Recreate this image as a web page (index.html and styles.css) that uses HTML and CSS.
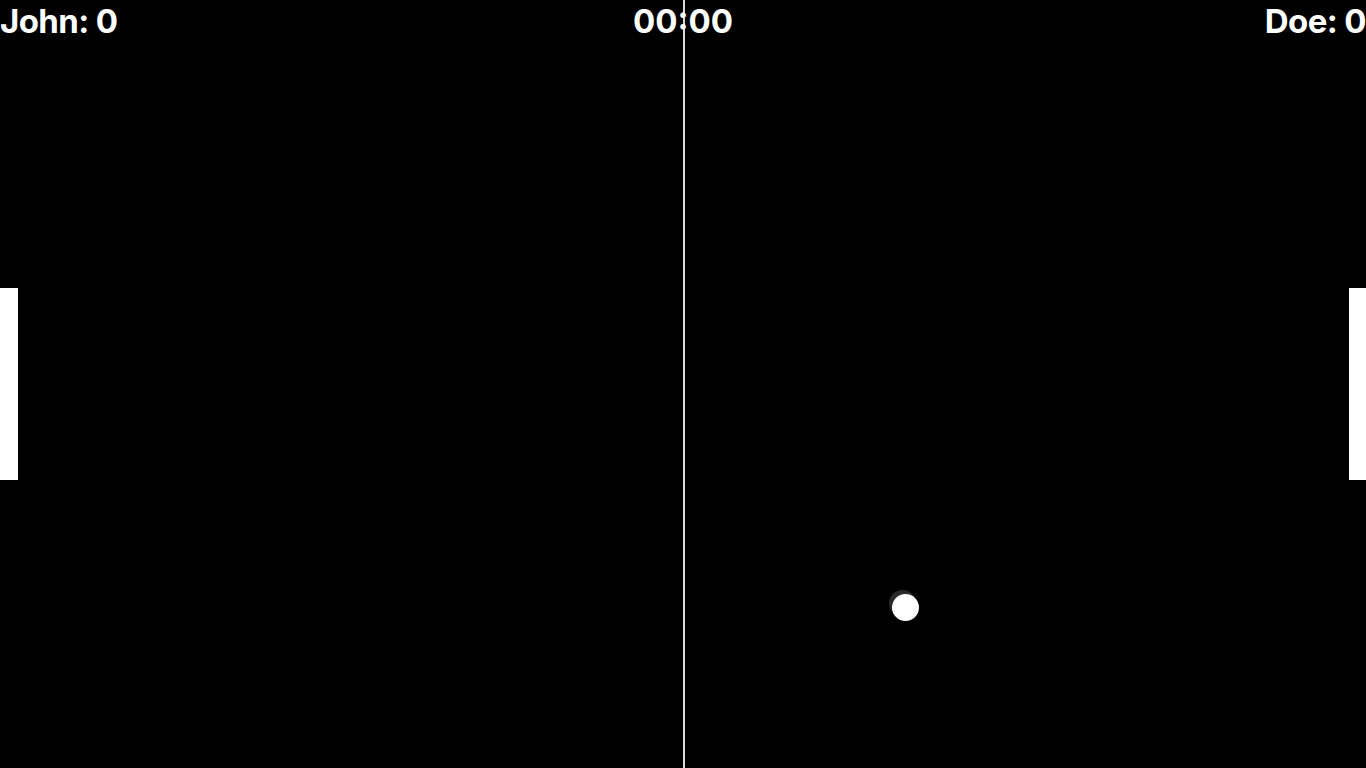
FILE: index.html
```html
<!DOCTYPE html>
<html lang="en">
<head>
<meta charset="utf-8">
<title>Pong</title>
<link rel="stylesheet" href="styles.css">
</head>
<body>
<main class="court">
  <div class="net"></div>
  <header class="scoreboard">
    <span class="score score-left">John: 0</span>
    <span class="timer">00:00</span>
    <span class="score score-right">Doe: 0</span>
  </header>
  <div class="paddle paddle-left"></div>
  <div class="paddle paddle-right"></div>
  <div class="ball ball-trail"></div>
  <div class="ball"></div>
</main>
</body>
</html>
```
FILE: styles.css
```css
html, body {
  margin: 0;
  padding: 0;
  background: #000;
  height: 100%;
  overflow: hidden;
}
.court {
  position: relative;
  width: 100%;
  height: 100vh;
  background: #000;
  font-family: Inter, "Noto Sans", sans-serif;
  color: #fff;
}
.scoreboard {
  position: relative;
  z-index: 1;
  display: flex;
  justify-content: space-between;
  align-items: flex-start;
  font-weight: 700;
  font-size: 33px;
  line-height: 42px;
  letter-spacing: -0.6px;
}
.timer {
  position: absolute;
  left: 50%;
  transform: translateX(-50%);
  letter-spacing: 0;
}
.net {
  position: absolute;
  left: 683px;
  top: 0;
  width: 2px;
  height: 100%;
  background: #d8d8d8;
}
.paddle {
  position: absolute;
  top: 288px;
  width: 18px;
  height: 192px;
  background: #fff;
}
.paddle-left { left: 0; }
.paddle-right { right: 0; width: 17px; }
.ball {
  position: absolute;
  left: 892px;
  top: 594px;
  width: 27px;
  height: 27px;
  border-radius: 50%;
  background: #fff;
}
.ball-trail {
  left: 889px;
  top: 590px;
  background: #2a2a2a;
}
```
